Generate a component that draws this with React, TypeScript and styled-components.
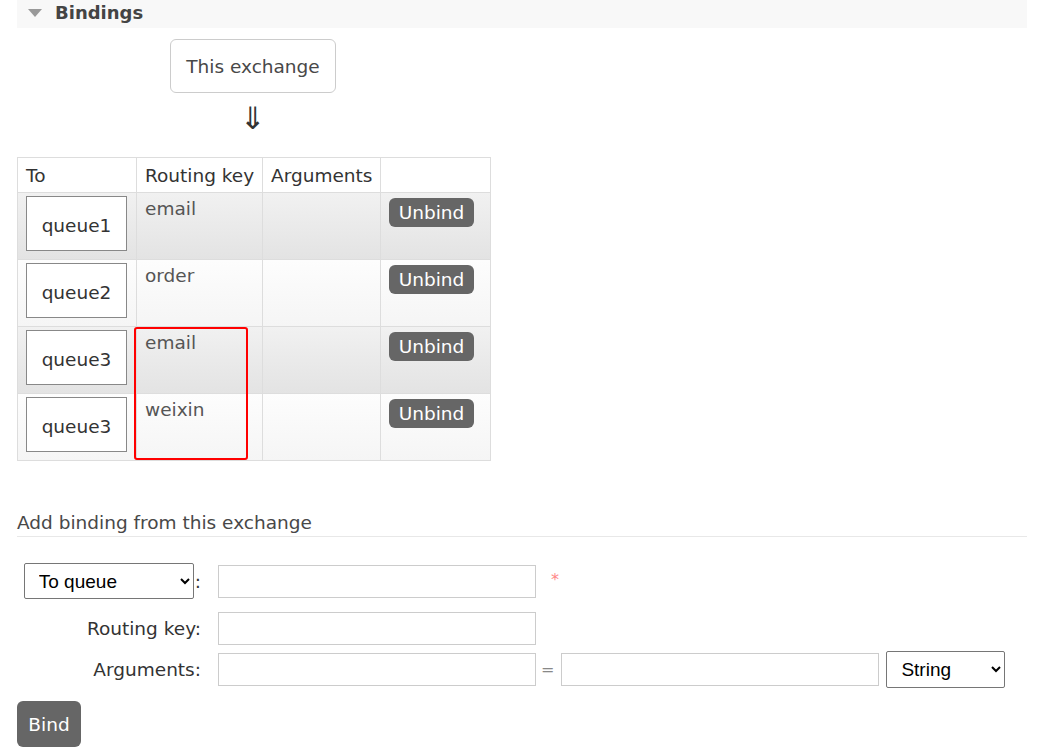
import { ReactElement } from 'react';
import styled, { createGlobalStyle } from 'styled-components';

const GlobalStyle = createGlobalStyle`
    body {
        margin: 0;
        background: #fff;
        font-family: "DejaVu Sans", Verdana, sans-serif;
        font-size: 18.5px;
        color: #484848;
    }
`;

const Page = styled.div`
    padding: 0 23px 0 17px;
    width: 1010px;
`;

const SectionBar = styled.div`
    height: 30px;
    background: #f8f8f8;
    display: flex;
    align-items: center;
    padding-left: 11px;
    margin-top: -7px;
    padding-top: 5px;
    box-sizing: content-box;
`;

const Triangle = styled.span`
    width: 0;
    height: 0;
    border-left: 7px solid transparent;
    border-right: 7px solid transparent;
    border-top: 8px solid #999;
    margin-right: 13px;
`;

const SectionTitle = styled.span`
    font-weight: bold;
    font-size: 18px;
    color: #444;
    line-height: 1;
`;

const Source = styled.div`
    width: 166px;
    margin: 11px 0 0 153px;
    display: flex;
    flex-direction: column;
    align-items: center;
`;

const ExchangeBox = styled.div`
    width: 166px;
    height: 54px;
    box-sizing: border-box;
    border: 1px solid #ccc;
    border-radius: 6px;
    display: flex;
    align-items: center;
    justify-content: center;
    color: #484848;
`;

const Arrow = styled.div`
    font-family: "DejaVu Sans", sans-serif;
    font-size: 31px;
    line-height: 30px;
    margin-top: 10px;
    color: #333;
`;

const TableWrap = styled.div`
    position: relative;
    width: 473px;
    margin-top: 24px;
`;

const Table = styled.table`
    border-collapse: collapse;
    width: 473px;
    table-layout: fixed;
`;

const Th = styled.th<{ $w: number }>`
    width: ${(p) => p.$w}px;
    height: 35px;
    box-sizing: border-box;
    border: 1px solid #ddd;
    text-align: left;
    font-weight: normal;
    color: #333;
    padding: 2px 0 0 8px;
    vertical-align: middle;
    white-space: nowrap;
    line-height: 22px;
`;

const Row = styled.tr<{ $alt: boolean }>`
    background: ${(p) =>
        p.$alt ? 'linear-gradient(#fdfdfd, #f5f5f5)' : 'linear-gradient(#f1f1f1, #e3e3e3)'};
`;

const Td = styled.td`
    height: 67px;
    box-sizing: border-box;
    border: 1px solid #ddd;
    vertical-align: top;
    padding: 3px 8px;
    color: #555;
`;

const QueueBox = styled.div`
    width: 101px;
    height: 55px;
    box-sizing: border-box;
    border: 1px solid #888;
    background: #fff;
    display: flex;
    align-items: center;
    justify-content: center;
    padding-top: 4px;
    color: #333;
`;

const KeyText = styled.div`
    line-height: 22px;
    padding-top: 2px;
`;

const Button = styled.button<{ $h: number; $w: number }>`
    width: ${(p) => p.$w}px;
    height: ${(p) => p.$h}px;
    border: none;
    border-radius: 6px;
    background: #666;
    color: #fff;
    font-family: "DejaVu Sans", Verdana, sans-serif;
    font-size: 18.5px;
    padding: 0;
    display: flex;
    align-items: center;
    justify-content: center;
`;

const UnbindButton = styled(Button)`
    margin-top: 2px;
`;

const Highlight = styled.div`
    position: absolute;
    left: 117px;
    top: 170px;
    width: 114px;
    height: 133px;
    box-sizing: border-box;
    border: 2px solid #f00;
    border-radius: 3px;
    pointer-events: none;
`;

const SubTitle = styled.h3`
    margin: 51px 0 0;
    font-size: 18.5px;
    font-weight: normal;
    color: #484848;
    padding-bottom: 2px;
    border-bottom: 1px solid #e8e8e8;
    line-height: 22px;
`;

const Form = styled.div`
    margin-top: 26px;
    display: flex;
    flex-direction: column;
`;

const FormRow = styled.div<{ $gap: number }>`
    display: flex;
    align-items: center;
    margin-top: ${(p) => p.$gap}px;
`;

const LabelCell = styled.div`
    width: 184px;
    display: flex;
    justify-content: flex-end;
    align-items: center;
    color: #333;
    margin-right: 17px;
`;

const Select = styled.select<{ $w: number; $h: number }>`
    width: ${(p) => p.$w}px;
    height: ${(p) => p.$h}px;
    font-family: "Liberation Sans", Arial, sans-serif;
    font-size: 19px;
    color: #000;
    background: #fff;
    border: 1px solid #767676;
    border-radius: 2px;
    padding: 0 4px 0 10px;
`;

const Colon = styled.span`
    margin-left: 1px;
    color: #333;
`;

const Input = styled.input`
    width: 318px;
    height: 33px;
    box-sizing: border-box;
    border: 1px solid #ccc;
    font-size: 16px;
    padding: 2px 4px;
`;

const Asterisk = styled.span`
    color: #f88;
    margin-left: 15px;
    align-self: flex-start;
    font-size: 16px;
    margin-top: 7px;
`;

const Equals = styled.span`
    color: #888;
    margin: 0 7px 0 5px;
    font-size: 16px;
`;

const ArgSelect = styled(Select)`
    margin-left: 7px;
`;

const BindButton = styled(Button)`
    margin-top: 13px;
`;

const bindings = [
    { queue: 'queue1', key: 'email' },
    { queue: 'queue2', key: 'order' },
    { queue: 'queue3', key: 'email' },
    { queue: 'queue3', key: 'weixin' },
];

const App = (): ReactElement => (
    <Page>
        <GlobalStyle />
        <SectionBar>
            <Triangle />
            <SectionTitle>Bindings</SectionTitle>
        </SectionBar>
        <Source>
            <ExchangeBox>This exchange</ExchangeBox>
            <Arrow>⇓</Arrow>
        </Source>
        <TableWrap>
            <Table>
                <thead>
                    <tr>
                        <Th $w={119}>To</Th>
                        <Th $w={126}>Routing key</Th>
                        <Th $w={118}>Arguments</Th>
                        <Th $w={110} />
                    </tr>
                </thead>
                <tbody>
                    {bindings.map((b, i) => (
                        <Row key={i} $alt={i % 2 === 1}>
                            <Td>
                                <QueueBox>{b.queue}</QueueBox>
                            </Td>
                            <Td>
                                <KeyText>{b.key}</KeyText>
                            </Td>
                            <Td />
                            <Td>
                                <UnbindButton $w={85} $h={29}>
                                    Unbind
                                </UnbindButton>
                            </Td>
                        </Row>
                    ))}
                </tbody>
            </Table>
            <Highlight />
        </TableWrap>
        <SubTitle>Add binding from this exchange</SubTitle>
        <Form>
            <FormRow $gap={0}>
                <LabelCell>
                    <Select $w={170} $h={36} defaultValue="queue">
                        <option value="queue">To queue</option>
                        <option value="exchange">To exchange</option>
                    </Select>
                    <Colon>:</Colon>
                </LabelCell>
                <Input />
                <Asterisk>*</Asterisk>
            </FormRow>
            <FormRow $gap={13}>
                <LabelCell>Routing key:</LabelCell>
                <Input />
            </FormRow>
            <FormRow $gap={6}>
                <LabelCell>Arguments:</LabelCell>
                <Input />
                <Equals>=</Equals>
                <Input />
                <ArgSelect $w={119} $h={37} defaultValue="string">
                    <option value="string">String</option>
                    <option value="number">Number</option>
                </ArgSelect>
            </FormRow>
            <div>
                <BindButton $w={64} $h={46}>
                    Bind
                </BindButton>
            </div>
        </Form>
    </Page>
);

export default App;
